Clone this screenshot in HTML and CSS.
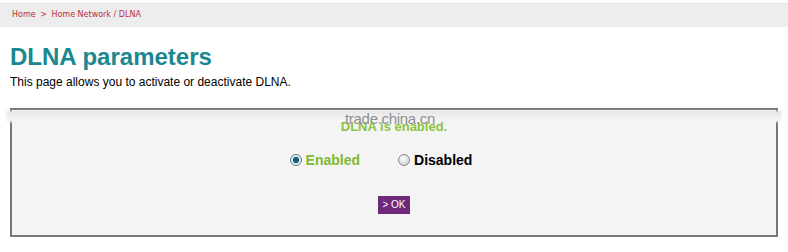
FILE: index.html
```html
<!DOCTYPE html>
<html>
<head>
<meta charset="utf-8">
<link rel="stylesheet" href="styles.css">
</head>
<body>
<div class="crumbs"><span>Home</span> <span class="sep">&gt;</span> <span>Home Network / DLNA</span></div>
<h1 class="title">DLNA parameters</h1>
<p class="desc">This page allows you to activate or deactivate DLNA.</p>
<div class="box">
  <div class="band"></div>
  <div class="status">DLNA is enabled.</div>
  <div class="watermark">trade.china.cn</div>
  <div class="options">
    <label class="opt on"><span class="radio checked"></span>Enabled</label>
    <label class="opt off"><span class="radio"></span>Disabled</label>
  </div>
  <div class="actions"><span class="btn">&gt; OK</span></div>
</div>
</body>
</html>
```
FILE: styles.css
```css
html, body { margin: 0; padding: 0; background: #fff; }
body { font-family: "Liberation Sans", Arial, sans-serif; color: #000; }

.crumbs {
  margin-top: 3px;
  height: 23px;
  line-height: 22px;
  background: #ededed;
  border-top: 1px solid #e6e6e6;
  padding-left: 12px;
  font-family: "DejaVu Sans", Verdana, sans-serif;
  font-size: 8px;
  color: #b8323a;
}
.crumbs .sep { color: #b8323a; margin: 0 2px; }

.title {
  margin: 16px 0 0 10px;
  font-size: 24px;
  line-height: 28px;
  font-weight: bold;
  color: #1b8791;
}
.desc {
  margin: 4px 0 0 10px;
  font-size: 12px;
  line-height: 14px;
}

.box {
  position: relative;
  margin: 19px 10px 0 10px;
  border: 2px solid #777;
  background: #f4f4f4;
  padding: 9px 0 21px 0;
  text-align: center;
}
.band {
  position: absolute;
  left: -6px; right: -6px; top: 1px;
  height: 11px;
  background: linear-gradient(#e6e6e6, #f0f0f0 60%, #f7f7f7);
  filter: blur(1px);
}
.status {
  position: relative;
  font-size: 13px;
  line-height: 16px;
  font-weight: bold;
  color: #8cc43c;
}
.watermark {
  position: absolute;
  left: 333px; top: 1px;
  font-size: 15px;
  line-height: 16px;
  color: #8f8f8f;
  letter-spacing: -0.3px;
}
.options {
  margin-top: 15px;
  height: 20px;
  display: flex;
  justify-content: center;
  align-items: center;
  gap: 38px;
  padding-right: 26px;
}
.opt {
  display: flex;
  align-items: center;
  gap: 4px;
  font-size: 14px;
  font-weight: bold;
}
.opt.on { color: #7fb92e; }
.opt.off { color: #000; }
.radio {
  width: 10px; height: 10px;
  border-radius: 50%;
  border: 1px solid #8a8a8a;
  background: radial-gradient(circle at 40% 35%, #fff, #d8d8d8 70%, #bcbcbc);
  display: inline-block;
}
.radio.checked {
  border-color: #5a7c8c;
  background: radial-gradient(circle at 50% 50%, #0f4c68 0, #2a6f8f 3px, #cfe0e8 3.5px, #f4f8fa 5px);
}
.actions {
  margin-top: 26px;
  display: flex;
  justify-content: center;
}
.btn {
  display: inline-block;
  width: 32px; height: 18px;
  line-height: 18px;
  background: #6e2a78;
  color: #fff;
  font-size: 10px;
  text-align: center;
}
```
